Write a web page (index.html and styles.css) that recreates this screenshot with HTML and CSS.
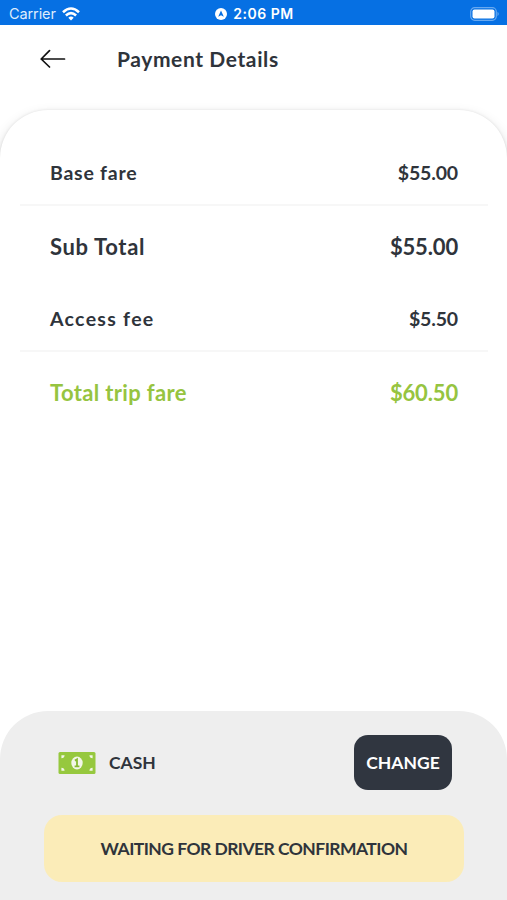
FILE: index.html
```html
<!DOCTYPE html>
<html lang="en">
<head>
<meta charset="utf-8">
<title>Payment Details</title>
<link rel="stylesheet" href="styles.css">
</head>
<body>
<div class="screen">
  <div class="status">
    <div class="status-left">
      <span class="carrier">Carrier</span>
      <svg width="18" height="14" viewBox="0 0 18 14" fill="none" stroke="#fff" stroke-width="2.6"><path d="M1 5.2Q9-2.2 17 5.2"/><path d="M3.9 8.5Q9 3.8 14.1 8.5"/><path d="M6.3 10.8Q9 8.3 11.7 10.8L9 13.6Z" fill="#fff" stroke="none"/></svg>
    </div>
    <div class="status-time">
      <svg width="12" height="12" viewBox="0 0 12 12"><circle cx="6" cy="6" r="6" fill="#fff"/><path d="M3.2 8.8L6 2.6L8.8 8.8L6 7.3Z" fill="#0670e3"/></svg>
      <span class="time">2:06 PM</span>
    </div>
    <svg class="battery" width="30" height="14" viewBox="0 0 30 14"><rect x=".7" y=".7" width="25.6" height="12.6" rx="4" fill="none" stroke="#68a9f0" stroke-width="1.2"/><rect x="2.5" y="2.5" width="22" height="9" rx="2" fill="#fff"/><path d="M27.5 4.8Q30 7 27.5 9.2Z" fill="#68a9f0"/></svg>
  </div>
  <header class="header">
    <svg class="back" width="26" height="20" viewBox="0 0 26 20" fill="none" stroke="#111" stroke-width="1.7" stroke-linecap="round" stroke-linejoin="round"><path d="M9.5 1.7L1.2 10L9.5 18M1.2 10H24.5"/></svg>
    <h1 class="title">Payment Details</h1>
  </header>
  <main class="card">
    <div class="row ruled"><span class="base">Base fare</span><span class="amount">$55.00</span></div>
    <div class="row large"><span class="sub">Sub Total</span><span class="amount">$55.00</span></div>
    <div class="row ruled"><span class="access">Access fee</span><span class="amount">$5.50</span></div>
    <div class="row large total"><span class="trip">Total trip fare</span><span class="amount">$60.50</span></div>
  </main>
  <footer class="footer">
    <div class="method">
      <svg width="38" height="22" viewBox="0 0 38 22"><rect x=".5" width="37" height="22" rx="1.5" fill="#96c83e"/><g fill="#f2f6e8"><ellipse cx="19" cy="11" rx="5.7" ry="6.4"/><path d="M3.4 3.2H6.6Q6.4 6 3.4 6.2ZM34.6 3.2H31.4Q31.6 6 34.6 6.2ZM3.4 18.8H6.6Q6.4 16 3.4 15.8ZM34.6 18.8H31.4Q31.6 16 34.6 15.8Z"/></g><path d="M16.9 8.6L19 7.4V14M16.6 14.3H21.4" fill="none" stroke="#86ba32" stroke-width="1.8"/></svg>
      <span class="cash">CASH</span>
      <button class="change">CHANGE</button>
    </div>
    <div class="waiting"><span>WAITING FOR DRIVER CONFIRMATION</span></div>
  </footer>
</div>
</body>
</html>
```
FILE: styles.css
```css
* { box-sizing: border-box; }
body { margin: 0; background: #fff; font-family: Lato, sans-serif; font-weight: 700; color: #2f343b; }
.screen { display: flex; flex-direction: column; width: 507px; height: 900px; overflow: hidden; }
.status { display: grid; grid-template-columns: 1fr auto 1fr; align-items: center; height: 25px; padding: 2px 7px 0 9px; background: #0670e3; color: #fff; font-family: Inter, sans-serif; font-size: 14.5px; line-height: 20px; flex: none; }
.status-left, .status-time { display: flex; align-items: center; gap: 6px; }
.carrier { font-weight: 400; letter-spacing: -.1px; color: #deecfc; }
.time { font-weight: 600; font-size: 14px; letter-spacing: .5px; }
.battery { justify-self: end; }
.header { display: flex; align-items: center; height: 85px; padding: 0 40px 17px; flex: none; }
.title { margin: 0 0 0 51px; font-size: 21px; line-height: 28px; font-weight: 700; letter-spacing: .6px; }
.card { flex: 1; padding: 26px 19px 0 20px; border-radius: 48px 48px 0 0; background: #fff; box-shadow: 0 0 3px rgba(0,0,0,.1), 0 6px 14px rgba(0,0,0,.16); clip-path: inset(-12px 0 0 0); }
.row { display: flex; justify-content: space-between; align-items: center; padding: 0 30px; font-size: 19.5px; line-height: 28px; white-space: nowrap; }
.ruled { border-bottom: 2px solid #f7f7f7; height: 70px; padding-top: 6px; }
.large { height: 81px; font-size: 22px; }
.large + .ruled { height: 65px; padding-top: 1px; }
.base { letter-spacing: .75px; }
.sub { letter-spacing: .65px; }
.access { letter-spacing: 1.3px; }
.trip { letter-spacing: .35px; }
.amount { letter-spacing: -.15px; }
.total { color: #96c440; }
.footer { flex: none; height: 189px; padding: 24px 43px 0 44px; border-radius: 48px 48px 0 0; background: #eee; }
.method { display: flex; align-items: center; height: 55px; padding: 0 12px 0 14px; }
.cash { margin-left: 13px; font-size: 17.5px; }
.change { width: 98px; height: 55px; margin-left: auto; padding: 0; border: 0; border-radius: 14px; background: #303640; color: #fff; font: 700 17.5px/24px Lato, sans-serif; }
.waiting { display: flex; align-items: center; justify-content: center; height: 67px; margin-top: 25px; border-radius: 18px; background: #fbecb8; font-size: 17.5px; letter-spacing: -.55px; white-space: nowrap; }
```
